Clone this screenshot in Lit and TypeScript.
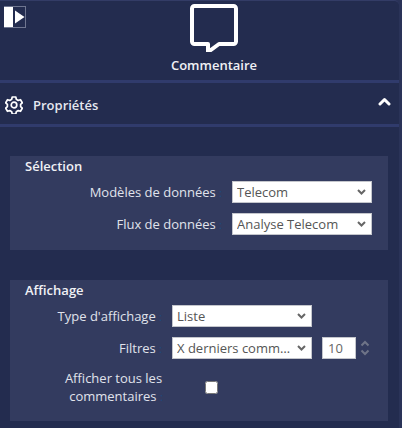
import { LitElement, html, css } from "lit";
import { customElement } from "lit/decorators.js";

@customElement("app-root")
export class AppRoot extends LitElement {
  static styles = css`
    :host {
      display: block;
      width: 402px;
      height: 428px;
      overflow: hidden;
      background: #2a3358;
      font-family: "Open Sans", sans-serif;
      color: #e6e8f0;
      font-size: 13px;
    }
    .panel {
      width: 399px;
      height: 428px;
      box-sizing: border-box;
      background: #232c4f;
      border-top: 1px solid #333c66;
      border-top-right-radius: 5px;
      position: relative;
    }
    .toggle {
      position: absolute;
      left: 4px;
      top: 5px;
      width: 22px;
      height: 22px;
      box-sizing: border-box;
      border: 1px solid #6f7690;
      border-left: none;
      display: flex;
    }
    .toggle-bar {
      width: 9px;
      background: #fff;
    }
    .toggle svg {
      margin-left: 1px;
      margin-top: 3px;
    }
    .head {
      height: 82px;
      box-sizing: border-box;
      padding: 3px 0 0 29px;
      display: flex;
      flex-direction: column;
      align-items: center;
      border-bottom: 3px solid #303b6c;
    }
    .head svg {
      display: block;
    }
    .head-title {
      margin-top: 5px;
      font-size: 13px;
      font-weight: 600;
      line-height: 17px;
      color: #f0f1f5;
    }
    .props {
      height: 44px;
      box-sizing: border-box;
      padding: 2px 8px 0 5px;
      display: flex;
      align-items: center;
      border-bottom: 3px solid #303b6c;
    }
    .props-title {
      margin-left: 10px;
      font-size: 13px;
      font-weight: 600;
      color: #e6e8f0;
      flex: 1;
    }
    .chev {
      margin-top: -6px;
    }
    .gear {
      display: block;
      flex: none;
    }
    .sections {
      padding: 29px 11px 0 10px;
      display: flex;
      flex-direction: column;
      gap: 30px;
    }
    .section {
      background: #333b5f;
      padding: 1px 16px 0 15px;
      box-sizing: border-box;
    }
    .s1 {
      height: 94px;
    }
    .s2 {
      height: 141px;
    }
    .sec-title {
      font-size: 13px;
      font-weight: 600;
      line-height: 18px;
      color: #f0f1f5;
    }
    .rows {
      display: flex;
      flex-direction: column;
      gap: 10px;
      margin-top: 6px;
    }
    .row {
      display: flex;
      align-items: center;
      height: 22px;
    }
    .label {
      text-align: right;
      white-space: nowrap;
      color: #e0e3ec;
      flex: none;
    }
    .label b {
      font-weight: 400;
      color: #1f4a80;
      font-size: 11px;
    }
    .l1 {
      width: 197px;
      margin-right: 10px;
    }
    .l2 {
      width: 137px;
      margin-right: 10px;
    }
    .select {
      width: 140px;
      height: 22px;
      box-sizing: border-box;
      border: 1px solid #c4c6cc;
      background: #fff;
      color: #555;
      font-size: 13px;
      line-height: 20px;
      padding: 0 5px 0 4px;
      display: flex;
      align-items: center;
      flex: none;
    }
    .select span {
      flex: 1;
      min-width: 0;
      white-space: nowrap;
      overflow: hidden;
      text-overflow: ellipsis;
      margin-right: 4px;
    }
    .select svg {
      flex: none;
      display: block;
    }
    .num {
      width: 34px;
      height: 22px;
      box-sizing: border-box;
      margin-left: 10px;
      border: 1px solid #c4c6cc;
      background: #fff;
      color: #666;
      font-size: 13px;
      line-height: 20px;
      padding-left: 5px;
    }
    .spin {
      margin-left: 4px;
      display: block;
    }
    .row3 {
      height: 38px;
      margin-top: -1px;
    }
    .wrap {
      width: 147px;
      text-align: center;
      line-height: 18px;
      flex: none;
      box-sizing: border-box;
      padding: 0 4px 0 34px;
    }
    .wrap span {
      display: block;
    }
    .wrap .second {
      padding-left: 5px;
    }
    input[type="checkbox"] {
      margin: 0 0 0 33px;
      width: 13px;
      height: 13px;
    }
  `;

  private chevron() {
    return html`<svg width="9" height="6" viewBox="0 0 9 6" fill="none">
      <path d="M1 1 L4.500 4.500 L8 1" stroke="#666" stroke-width="2" />
    </svg>`;
  }

  render() {
    return html`
      <div class="panel">
        <div class="toggle">
          <div class="toggle-bar"></div>
          <svg width="11" height="14" viewBox="0 0 11 14"><path d="M1 0.5 L10.5 7 L1 13.5 Z" fill="#fff" /></svg>
        </div>
        <div class="head">
          <svg width="48" height="48" viewBox="0 0 48 48" fill="none">
            <path
              d="M4.5 2h39a2.5 2.5 0 0 1 2.5 2.5v33a2.5 2.5 0 0 1 -2.5 2.5h-14.5l-11 8v-8h-13.500a2.500 2.500 0 0 1 -2.500 -2.500v-33a2.500 2.500 0 0 1 2.500 -2.500z"
              stroke="#fff"
              stroke-width="4"
              stroke-linejoin="round"
            />
          </svg>
          <div class="head-title">Commentaire</div>
        </div>
        <div class="props">
          <svg class="gear" width="18" height="18" viewBox="0 0 18 18" fill="none" stroke="#fff" stroke-width="1.7" stroke-linejoin="round">
            <path
              d="M7.200 1h3.600l.5 2.300 1.900 1.100 2.300-.7 1.800 3.100-1.700 1.600v2.200l1.700 1.600-1.800 3.100-2.300-.7-1.900 1.100-.5 2.300h-3.600l-.5-2.300-1.900-1.100-2.300.7-1.800-3.100 1.700-1.600v-2.200l-1.700-1.600 1.800-3.100 2.300.7 1.900-1.100z"
            />
            <circle cx="9" cy="9" r="2.800" />
          </svg>
          <div class="props-title">Propriétés</div>
          <svg class="chev" width="13" height="9" viewBox="0 0 13 9" fill="none">
            <path d="M2 7 L6.500 2.500 L11 7" stroke="#fff" stroke-width="3" stroke-linecap="round" stroke-linejoin="round" />
          </svg>
        </div>
        <div class="sections">
          <div class="section s1">
            <div class="sec-title">Sélection</div>
            <div class="rows">
              <div class="row">
                <div class="label l1">Modèles de données <b>:</b></div>
                <div class="select"><span>Telecom</span>${this.chevron()}</div>
              </div>
              <div class="row">
                <div class="label l1">Flux de données <b>:</b></div>
                <div class="select"><span>Analyse Telecom</span>${this.chevron()}</div>
              </div>
            </div>
          </div>
          <div class="section s2">
            <div class="sec-title">Affichage</div>
            <div class="rows">
              <div class="row">
                <div class="label l2">Type d'affichage <b>:</b></div>
                <div class="select"><span>Liste</span>${this.chevron()}</div>
              </div>
              <div class="row">
                <div class="label l2">Filtres <b>:</b></div>
                <div class="select"><span>X derniers commentaires</span>${this.chevron()}</div>
                <div class="num">10</div>
                <svg class="spin" width="10" height="18" viewBox="0 0 10 18" fill="none" stroke="#6f7488" stroke-width="2">
                  <path d="M1.500 6.500 L5 3 L8.500 6.500" />
                  <path d="M1.500 11.500 L5 15 L8.500 11.500" />
                </svg>
              </div>
              <div class="row row3">
                <div class="label wrap"><span>Afficher tous les</span><span class="second">commentaires <b>:</b></span></div>
                <input type="checkbox" />
              </div>
            </div>
          </div>
        </div>
      </div>
    `;
  }
}
